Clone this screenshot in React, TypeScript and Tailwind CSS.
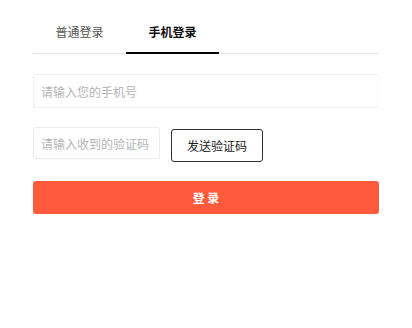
import { useState } from 'react';

const font = { fontFamily: '"Noto Sans CJK SC", "Noto Sans", sans-serif' };

export default function App() {
  const [tab, setTab] = useState<'normal' | 'phone'>('phone');
  const [phone, setPhone] = useState('');
  const [code, setCode] = useState('');

  return (
    <div className="w-[412px] h-[328px] bg-white" style={font}>
      <div className="ml-[33px] w-[346px] pt-[10px]">
        {/* Tabs */}
        <div className="flex border-b border-[#e6e6e6]">
          <button
            onClick={() => setTab('normal')}
            className={`relative w-[93px] h-[43px] flex items-center justify-center text-[12px] ${tab === 'normal' ? 'text-[#111] font-semibold' : 'text-[#555]'}`}
          >
            普通登录
            {tab === 'normal' && <span className="absolute left-0 right-0 bottom-[-1px] h-[2px] bg-black" />}
          </button>
          <button
            onClick={() => setTab('phone')}
            className={`relative w-[93px] h-[43px] flex items-center justify-center text-[12px] ${tab === 'phone' ? 'text-[#111] font-semibold' : 'text-[#555]'}`}
          >
            手机登录
            {tab === 'phone' && <span className="absolute left-0 right-0 bottom-[-1px] h-[2px] bg-black" />}
          </button>
        </div>

        {/* Phone input */}
        <input
          value={phone}
          onChange={(e) => setPhone(e.target.value)}
          placeholder="请输入您的手机号"
          className="mt-[20px] block w-full h-[34px] px-[7px] text-[12px] border border-[#efefef] border-r-[#f9f9f9] rounded-[3px] outline-none placeholder:text-[#b4b4b4]"
        />

        {/* Code row */}
        <div className="mt-[19px] flex items-start gap-[11px]">
          <input
            value={code}
            onChange={(e) => setCode(e.target.value)}
            placeholder="请输入收到的验证码"
            className="w-[127px] h-[32px] px-[7px] text-[12px] border border-[#ececec] rounded-[3px] outline-none placeholder:text-[#b4b4b4]"
          />
          <button className="mt-[2px] w-[92px] h-[33px] border border-[#333] rounded-[3px] text-[12px] text-[#222]">
            发送验证码
          </button>
        </div>

        {/* Submit */}
        <button className="mt-[19px] w-full h-[33px] rounded-[3px] bg-[#ff5a3c] text-white text-[12px] font-semibold">
          登 录
        </button>
      </div>
    </div>
  );
}
